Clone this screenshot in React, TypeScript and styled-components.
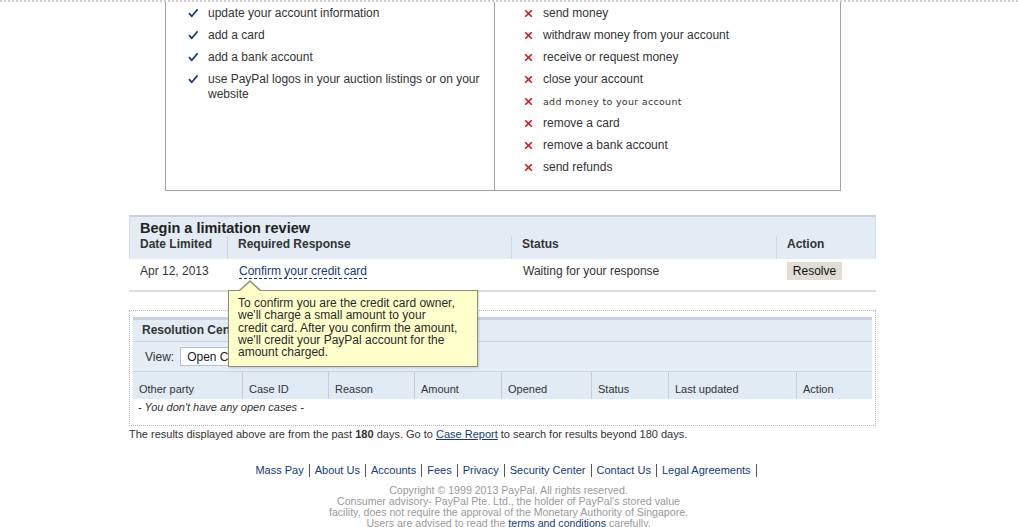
import React from 'react';
import styled, { createGlobalStyle } from 'styled-components';

const GlobalStyle = createGlobalStyle`
  html, body {
    margin: 0;
    padding: 0;
    background: #fff;
    overflow: hidden;
  }
  body {
    font-family: "Liberation Sans", Arial, sans-serif;
    color: #333;
  }
`;

const allowed = [
    'update your account information',
    'add a card',
    'add a bank account',
    'use PayPal logos in your auction listings or on your website',
];

const blocked: { text: string; odd?: boolean }[] = [
    { text: 'send money' },
    { text: 'withdraw money from your account' },
    { text: 'receive or request money' },
    { text: 'close your account' },
    { text: 'add money to your account', odd: true },
    { text: 'remove a card' },
    { text: 'remove a bank account' },
    { text: 'send refunds' },
];

const caseCols = [
    { label: 'Other party', w: 110 },
    { label: 'Case ID', w: 86 },
    { label: 'Reason', w: 86 },
    { label: 'Amount', w: 87 },
    { label: 'Opened', w: 90 },
    { label: 'Status', w: 77 },
    { label: 'Last updated', w: 128 },
    { label: 'Action', w: 75 },
];

const footerLinks = ['Mass Pay', 'About Us', 'Accounts', 'Fees', 'Privacy', 'Security Center', 'Contact Us', 'Legal Agreements'];

const Check = () => (
    <svg width="10" height="10" viewBox="0 0 10 10">
        <path d="M1 5.2 L3.8 8.3 L9.6 1.2" stroke="#1c3f73" strokeWidth="1.8" fill="none" strokeLinejoin="round" />
    </svg>
);

const Cross = () => (
    <svg width="9" height="9" viewBox="0 0 9 9">
        <path d="M1.2 1.2 L7.8 7.8 M7.8 1.2 L1.2 7.8" stroke="#d4161c" strokeWidth="1.6" fill="none" />
    </svg>
);

export default function App() {
    return (
        <>
            <GlobalStyle />
            <TopEdge />
            <Page>
                <Permissions>
                    <PermColumn pad={22}>
                        {allowed.map(t => (
                            <PermItem key={t}>
                                <IconSlot><Check /></IconSlot>
                                <span>{t}</span>
                            </PermItem>
                        ))}
                    </PermColumn>
                    <PermColumn pad={29} divider>
                        {blocked.map(b => (
                            <PermItem key={b.text}>
                                <IconSlot><Cross /></IconSlot>
                                {b.odd ? <OddText>{b.text}</OddText> : <span>{b.text}</span>}
                            </PermItem>
                        ))}
                    </PermColumn>
                </Permissions>

                <Review>
                    <ReviewHead>
                        <ReviewTitle>Begin a limitation review</ReviewTitle>
                        <ReviewGrid>
                            <HeadCell>Date Limited</HeadCell>
                            <HeadCell>Required Response</HeadCell>
                            <HeadCell>Status</HeadCell>
                            <HeadCell last>Action</HeadCell>
                        </ReviewGrid>
                    </ReviewHead>
                    <ReviewRow>
                        <RowCell>Apr 12, 2013</RowCell>
                        <RowCell>
                            <TipAnchor>
                                <DashedLink href="#">Confirm your credit card</DashedLink>
                                <Tooltip>
                                    To confirm you are the credit card owner,<br />
                                    we'll charge a small amount to your<br />
                                    credit card. After you confirm the amount,<br />
                                    we'll credit your PayPal account for the<br />
                                    amount charged.
                                </Tooltip>
                            </TipAnchor>
                        </RowCell>
                        <RowCell>Waiting for your response</RowCell>
                        <RowCell><ResolveButton>Resolve</ResolveButton></RowCell>
                    </ReviewRow>
                </Review>

                <Resolution>
                    <ResHeader>Resolution Center</ResHeader>
                    <FilterRow>
                        View:
                        <ViewSelect defaultValue="open">
                            <option value="open">Open Cases</option>
                        </ViewSelect>
                    </FilterRow>
                    <CaseHead>
                        {caseCols.map((c, i) => (
                            <CaseHeadCell key={c.label} style={{ width: c.w }} last={i === caseCols.length - 1}>
                                {c.label}
                            </CaseHeadCell>
                        ))}
                    </CaseHead>
                    <EmptyRow>- You don't have any open cases -</EmptyRow>
                </Resolution>

                <Note>
                    The results displayed above are from the past <b>180</b> days. Go to{' '}
                    <UnderLink href="#">Case Report</UnderLink> to search for results beyond 180 days.
                </Note>

                <FooterNav>
                    {footerLinks.map(l => (
                        <FooterLink key={l} href="#">{l}</FooterLink>
                    ))}
                </FooterNav>
                <Legal>
                    Copyright © 1999 2013 PayPal. All rights reserved.<br />
                    Consumer advisory- PayPal Pte. Ltd., the holder of PayPal's stored value<br />
                    facility, does not require the approval of the Monetary Authority of Singapore.<br />
                    Users are advised to read the <LegalLink href="#">terms and conditions</LegalLink> carefully.
                </Legal>
            </Page>
        </>
    );
}

const TopEdge = styled.div`
    height: 0;
    border-top: 2px dotted #cfcfcf;
`

const Page = styled.div`
    width: 747px;
    margin-left: 129px;
`

const Permissions = styled.div`
    display: flex;
    margin: 0 35px 0 36px;
    border: 1px solid #9ca79c;
    border-top: none;
    font-size: 12px;
    color: #333;
`

const PermColumn = styled.ul<{ pad: number; divider?: boolean }>`
    box-sizing: border-box;
    list-style: none;
    margin: 0;
    padding: 0 6px 12px ${p => p.pad}px;
    flex: ${p => (p.divider ? '0 0 346px' : '1')};
    border-left: ${p => (p.divider ? '1px solid #9ca79c' : 'none')};
`

const PermItem = styled.li`
    display: flex;
    align-items: flex-start;
    gap: 10px;
    padding: 3.5px 0;
    line-height: 15px;
`

const IconSlot = styled.span`
    display: flex;
    align-items: center;
    height: 15px;
`

const OddText = styled.span`
    font-family: "DejaVu Sans", Verdana, sans-serif;
    font-size: 9.5px;
    letter-spacing: 0.3px;
`

const Review = styled.section`
    margin-top: 24px;
    font-size: 12px;
`

const ReviewHead = styled.div`
    background: #e3ecf5;
    border-top: 2px solid #c9d0dc;
    border-left: 1px solid #d6dde6;
    border-right: 1px solid #d6dde6;
    padding-top: 3px;
`

const ReviewTitle = styled.h2`
    margin: 0;
    padding-left: 10px;
    font-size: 14.5px;
    line-height: 16px;
    font-weight: bold;
    color: #222;
`

const ReviewGrid = styled.div`
    display: grid;
    grid-template-columns: 98px 284px 265px 98px;
`

const HeadCell = styled.div<{ last?: boolean }>`
    padding: 0 10px 7px 10px;
    line-height: 16px;
    font-weight: bold;
    color: #333;
    border-right: ${p => (p.last ? 'none' : '1px solid #cfd8e2')};
`

const ReviewRow = styled.div`
    display: grid;
    grid-template-columns: 99px 284px 265px 99px;
    align-items: center;
    height: 24px;
    padding-bottom: 7px;
    border-bottom: 2px solid #dcdcdc;
    color: #333;
`

const RowCell = styled.div`
    padding-left: 11px;
    line-height: 14px;
`

const TipAnchor = styled.span`
    position: relative;
    display: inline-block;
`

const DashedLink = styled.a`
    color: #163a78;
    text-decoration: none;
    border-bottom: 1px dashed #163a78;
`

const Tooltip = styled.div`
    position: absolute;
    left: -11px;
    top: 26px;
    z-index: 5;
    width: 230px;
    padding: 6px 9px 8px 9px;
    background: #ffffcc;
    border: 1px solid #8d8d78;
    box-shadow: 1px 1px 2px rgba(0, 0, 0, 0.15);
    font-size: 12px;
    line-height: 12.3px;
    color: #2a2a2a;
    white-space: nowrap;

    &::before,
    &::after {
        content: '';
        position: absolute;
        width: 0;
        height: 0;
        border-style: solid;
    }
    &::before {
        left: 9px;
        top: -11px;
        border-width: 0 12px 11px 12px;
        border-color: transparent transparent #8d8d78 transparent;
    }
    &::after {
        left: 10px;
        top: -9px;
        border-width: 0 11px 10px 11px;
        border-color: transparent transparent #ffffcc transparent;
    }
`

const ResolveButton = styled.button`
    width: 55px;
    height: 18px;
    padding: 0;
    border: none;
    background: #e1ddd5;
    font-family: "Liberation Sans", Arial, sans-serif;
    font-size: 12px;
    color: #111;
    margin-left: -1px;
`

const Resolution = styled.section`
    margin-top: 18px;
    border: 1px dotted #b8b8c0;
    padding: 6px 3px 0 3px;
    height: 108px;
`

const ResHeader = styled.div`
    background: #e3ecf5;
    border-top: 3px solid #c8d3e1;
    border-bottom: 1px solid #ccd6e1;
    height: 21px;
    line-height: 20px;
    padding-left: 9px;
    font-size: 12px;
    font-weight: bold;
    color: #333;
`

const FilterRow = styled.div`
    display: flex;
    align-items: center;
    gap: 6px;
    height: 29px;
    padding-left: 12px;
    background: #e5eef6;
    border-bottom: 1px solid #cdd4dc;
    font-size: 12px;
    color: #333;
`

const ViewSelect = styled.select`
    height: 19px;
    width: 120px;
    border: 1px solid #b9c2cc;
    background: #fff;
    font-family: "Liberation Sans", Arial, sans-serif;
    font-size: 12px;
    color: #222;
    padding: 0 2px;
`

const CaseHead = styled.div`
    display: flex;
    height: 27px;
    background: #e1ebf5;
`

const CaseHeadCell = styled.div<{ last?: boolean }>`
    box-sizing: border-box;
    padding: 11px 0 0 6px;
    font-size: 11px;
    line-height: 13px;
    color: #333;
    border-right: ${p => (p.last ? 'none' : '1px solid #c6ced8')};
`

const EmptyRow = styled.div`
    padding: 2px 0 0 5px;
    font-size: 11px;
    line-height: 13px;
    font-style: italic;
    color: #333;
`

const Note = styled.p`
    margin: 2px 0 0;
    font-size: 11px;
    line-height: 13px;
    color: #333;
`

const UnderLink = styled.a`
    color: #163a78;
    text-decoration: underline;
`

const FooterNav = styled.nav`
    display: flex;
    justify-content: center;
    margin-top: 23px;
    padding-left: 2px;
`

const FooterLink = styled.a`
    font-size: 11px;
    line-height: 13px;
    padding: 0 5px;
    color: #163a78;
    text-decoration: none;
    border-right: 1px solid #555;
`

const Legal = styled.p`
    margin: 8px 0 0;
    text-align: center;
    padding-left: 12px;
    font-size: 10.6px;
    line-height: 11px;
    color: #9a9a9a;
`

const LegalLink = styled.a`
    color: #163a78;
    text-decoration: none;
`
